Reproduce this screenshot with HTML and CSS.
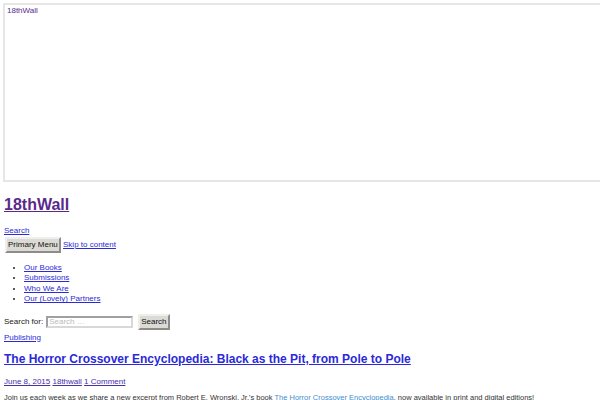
FILE: index.html
```html
<!DOCTYPE html>
<html lang="en">
<head>
    <meta charset="UTF-8">
    <meta name="viewport" content="width=device-width, initial-scale=1.0">
    <title>18thWall</title>
    <link rel="stylesheet" href="styles.css">
</head>
<body>
    <a class="banner-link visited" href="#">
        <div class="banner">18thWall</div>
    </a>

    <h1 class="site-title"><a class="visited" href="#">18thWall</a></h1>

    <div class="search-toggle"><a href="#">Search</a></div>

    <nav class="main-nav">
        <button class="menu-toggle">Primary Menu</button>
        <a href="#">Skip to content</a>
        <ul class="menu">
            <li><a href="#">Our Books</a></li>
            <li><a href="#">Submissions</a></li>
            <li><a href="#">Who We Are</a></li>
            <li><a href="#">Our (Lovely) Partners</a></li>
        </ul>
    </nav>

    <form class="search-form">
        <label>Search for:</label>
        <input type="search" placeholder="Search …">
        <button type="button" class="search-submit">Search</button>
    </form>

    <div class="cat"><a href="#">Publishing</a></div>

    <h2 class="entry-title"><a href="#">The Horror Crossover Encyclopedia: Black as the Pit, from Pole to Pole</a></h2>

    <div class="entry-meta">
        <a href="#">June 8, 2015</a> <a href="#">18thwall</a> <a href="#">1 Comment</a>
    </div>

    <p class="entry-content">Join us each week as we share a new excerpt from Robert E. Wronski, Jr.'s book <a href="#">The Horror Crossover Encyclopedia</a>, now available in print and digital editions!</p>
</body>
</html>
```

FILE: styles.css
```css
body {
    margin: 0;
    padding: 3px 4px;
    font-family: "Liberation Sans", Arial, sans-serif;
    font-size: 8px;
    line-height: 10px;
    color: #222;
    overflow: hidden;
}
a {
    color: #2a2ad8;
}
a.visited,
.visited a {
    color: #5a2a8a;
}
.banner-link {
    display: block;
    margin-left: -1px;
    text-decoration: none;
}
.banner {
    width: 640px;
    height: 175px;
    border: 2px solid #e6e6e6;
    padding: 0 2px;
    font-size: 8px;
    line-height: 12px;
}
.site-title {
    margin: 14px 0 0;
    font-size: 16px;
    line-height: 18px;
}
.search-toggle {
    margin-top: 12px;
}
.main-nav {
    margin-top: 1px;
}
.menu-toggle {
    box-sizing: border-box;
    height: 16px;
    font-family: inherit;
    font-size: 8px;
    line-height: 10px;
    color: #111;
    background: #dcdad5;
    border: 2px solid;
    border-color: #eeeeec #8e8c88 #8e8c88 #eeeeec;
    padding: 0 1px;
    margin-left: 1px;
}
.menu {
    margin: 10px 0 0;
    padding-left: 20px;
    line-height: 10.4px;
}
.search-form {
    margin-top: 9px;
    display: flex;
    align-items: center;
    gap: 3px;
}
.search-form input {
    box-sizing: border-box;
    width: 87px;
    height: 12px;
    font-family: inherit;
    font-size: 8px;
    border: 2px solid #d8d8d8;
    border-top-color: #a0a0a0;
    border-left-color: #a0a0a0;
    padding: 0 1px;
}
.search-form input::placeholder {
    color: #bbb;
}
.search-submit {
    box-sizing: border-box;
    height: 16px;
    margin-left: 2px;
    font-family: inherit;
    font-size: 8px;
    line-height: 10px;
    color: #111;
    background: #dcdad5;
    border: 2px solid;
    border-color: #eeeeec #8e8c88 #8e8c88 #eeeeec;
    padding: 0 1px;
}
.cat {
    margin-top: 3px;
}
.entry-title {
    margin: 9px 0 0;
    font-size: 12px;
    line-height: 15px;
}
.entry-meta {
    margin-top: 10px;
}
.entry-meta a {
    color: #4630a8;
}
.entry-content {
    margin: 6px 0 0;
    font-size: 7.5px;
    color: #333;
}
.entry-content a {
    color: #3f8fd0;
    text-decoration: none;
}
```
